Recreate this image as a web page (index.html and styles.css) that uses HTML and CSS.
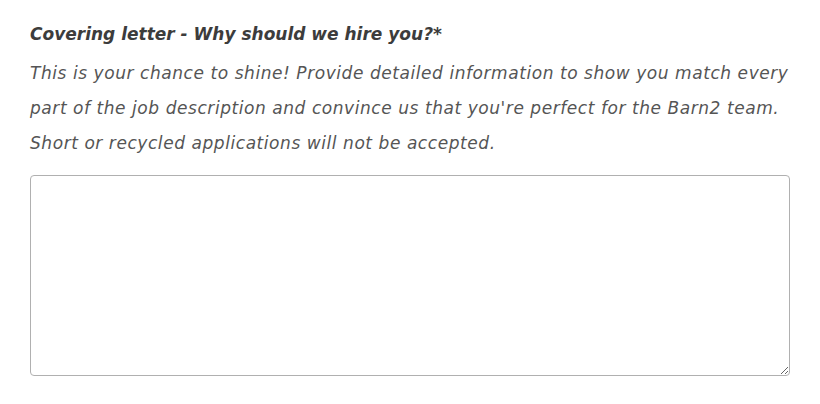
FILE: index.html
```html
<!DOCTYPE html>
<html>
<head>
<meta charset="utf-8">
<link rel="stylesheet" href="styles.css">
</head>
<body>
<div class="field">
  <label class="label" for="cover">Covering letter - Why should we hire you?*</label>
  <p class="desc">This is your chance to shine! Provide detailed information to show you match every<br>part of the job description and convince us that you're perfect for the Barn2 team.<br>Short or recycled applications will not be accepted.</p>
  <textarea id="cover" class="input"></textarea>
</div>
</body>
</html>
```
FILE: styles.css
```css
html, body { margin: 0; padding: 0; background: #fff; }
.field {
  padding: 22px 30px 0 30px;
  width: 760px;
  font-family: "DejaVu Sans", sans-serif;
  font-style: italic;
  color: #444;
}
.label {
  display: block;
  font-weight: bold;
  font-size: 17px;
  line-height: 24px;
  color: #3c3c3c;
}
.desc {
  margin: 10px -20px 0 0;
  font-size: 17px;
  line-height: 35px;
  letter-spacing: 0.56px;
  color: #555;
}
.input {
  display: block;
  box-sizing: border-box;
  margin-top: 14px;
  width: 760px;
  height: 201px;
  border: 1px solid #b0b0b0;
  border-radius: 4px;
  background: #fff;
}
```
